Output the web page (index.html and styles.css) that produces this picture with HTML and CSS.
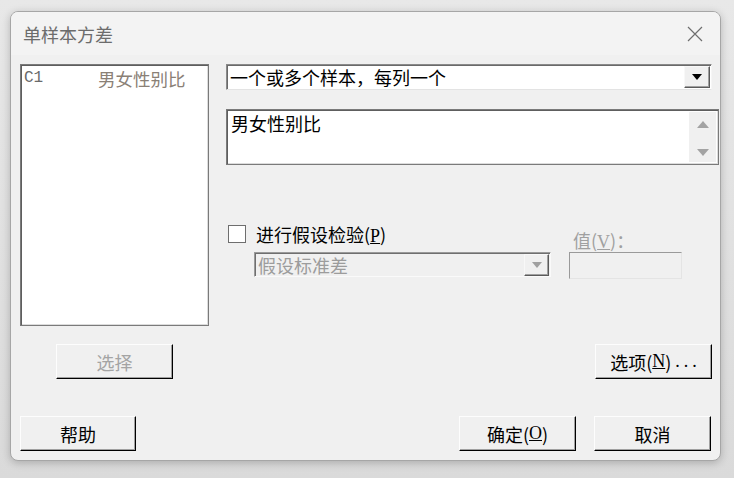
FILE: index.html
```html
<!DOCTYPE html>
<html lang="zh-CN">
<head>
<meta charset="utf-8">
<title>单样本方差</title>
<link rel="stylesheet" href="styles.css">
</head>
<body>
<div class="dialog">
  <div class="titlebar">
    <span class="title">单样本方差</span>
    <svg class="close" width="16" height="16" viewBox="0 0 16 16"><path d="M1 1L15 15M15 1L1 15" stroke="#6e6e6e" stroke-width="1.2" fill="none"/></svg>
  </div>
  <div class="body">
    <div class="main">
      <div class="listbox">
        <div class="var"><span class="vid">C1</span><span class="vname">男女性别比</span></div>
      </div>
      <div class="right">
        <div class="combo">
          <span class="combo-text">一个或多个样本，每列一个</span>
          <span class="drop"><svg width="10" height="6" viewBox="0 0 10 6"><path d="M0 0H10L5 6Z" fill="#000"/></svg></span>
        </div>
        <div class="textbox">
          <span class="tb-text">男女性别比</span>
          <div class="scroll">
            <svg width="12" height="7" viewBox="0 0 12 7"><path d="M0 7H12L6 0Z" fill="#a3a3a3"/></svg>
            <svg width="12" height="7" viewBox="0 0 12 7"><path d="M0 0H12L6 7Z" fill="#a3a3a3"/></svg>
          </div>
        </div>
        <div class="hyp">
          <div class="hyp-left">
            <label class="check-row"><span class="checkbox"></span><span>进行假设检验(<u>P</u>)</span></label>
            <div class="combo disabled">
              <span class="combo-text">假设标准差</span>
              <span class="drop"><svg width="10" height="6" viewBox="0 0 10 6"><path d="M0 0H10L5 6Z" fill="#a0a0a0"/></svg></span>
            </div>
          </div>
          <div class="hyp-right">
            <span class="val-label">值(<u>V</u>)：</span>
            <div class="valbox"></div>
          </div>
        </div>
      </div>
    </div>
    <div class="row1">
      <button class="btn btn-select" disabled>选择</button>
      <button class="btn">选项(<u>N</u>)<span class="dots">...</span></button>
    </div>
    <div class="row2">
      <button class="btn btn-help">帮助</button>
      <div class="row2-right">
        <button class="btn">确定(<u>O</u>)</button>
        <button class="btn">取消</button>
      </div>
    </div>
  </div>
</div>
</body>
</html>
```

FILE: styles.css
```css
html, body {
  margin: 0;
  padding: 0;
}
body {
  width: 734px;
  height: 478px;
  background: linear-gradient(#e8e8e8, #dadada);
  font-family: "Liberation Serif", "Noto Sans CJK SC", serif;
  font-size: 18px;
  color: #000;
  overflow: hidden;
}
.dialog {
  margin: 11px 0 0 10px;
  width: 709px;
  height: 448px;
  border: 1px solid #a6a6a6;
  border-radius: 8px;
  background: #f0f0f0;
  box-shadow: 0 2px 8px rgba(0, 0, 0, 0.22);
  overflow: hidden;
}
.titlebar {
  height: 43px;
  background: #f3f3f3;
  display: flex;
  align-items: center;
  justify-content: space-between;
  padding: 0 17px 0 12px;
}
.title {
  font-family: "Noto Sans CJK SC", sans-serif;
  font-size: 18px;
  color: #6c6c6c;
  line-height: 20px;
}
.close {
  display: block;
}
.body {
  padding: 9px 0 0 9px;
}
.main {
  display: flex;
  height: 262px;
}
.listbox {
  box-sizing: border-box;
  width: 189px;
  height: 262px;
  background: #fff;
  border: 1px solid #7a7a7a;
  box-shadow: inset 1px 1px #5e5e5e, inset -1px -1px #dcdcdc;
  padding: 2px 0 0 3px;
}
.var {
  display: flex;
  align-items: center;
  height: 22px;
}
.vid {
  font-family: "Liberation Mono", monospace;
  font-size: 16px;
  color: #6a6a6a;
  width: 74px;
}
.vname {
  font-family: "Noto Sans CJK SC", sans-serif;
  font-size: 17.5px;
  color: #8a8076;
}
.right {
  margin-left: 17px;
  width: 493px;
}
.combo {
  box-sizing: border-box;
  width: 486px;
  height: 26px;
  background: #fff;
  border: 1px solid;
  border-color: #8a8a8a #f6f6f6 #e3e3e3 #8a8a8a;
  box-shadow: inset 1px 1px #6a6a6a;
  display: flex;
  align-items: center;
  justify-content: space-between;
  padding: 0 1px 0 3px;
}
.combo-text {
  font-family: "Noto Sans CJK SC", sans-serif;
  font-size: 18px;
  line-height: 20px;
}
.drop {
  box-sizing: border-box;
  width: 26px;
  height: 22px;
  background: #f0f0f0;
  border: 1px solid;
  border-color: #f8f8f8 #5a5a5a #5a5a5a #f8f8f8;
  box-shadow: inset -1px -1px #a0a0a0;
  display: flex;
  align-items: center;
  justify-content: center;
}
.drop svg {
  display: block;
}
.textbox {
  box-sizing: border-box;
  margin-top: 19px;
  width: 493px;
  height: 56px;
  background: #fff;
  border: 1px solid #7a7a7a;
  box-shadow: inset 1px 1px #5e5e5e, inset -1px -1px #dcdcdc;
  display: flex;
  justify-content: space-between;
  padding: 2px 2px 2px 4px;
}
.tb-text {
  font-family: "Noto Sans CJK SC", sans-serif;
  font-size: 18px;
  line-height: 22px;
}
.scroll {
  width: 27px;
  background: #f0f0f0;
  display: flex;
  flex-direction: column;
  align-items: center;
  justify-content: space-between;
  padding: 9px 0 6px;
}
.scroll svg {
  display: block;
}
.hyp {
  margin-top: 60px;
  display: flex;
}
.hyp-left {
  width: 325px;
}
.check-row {
  display: flex;
  align-items: center;
  height: 18px;
  padding-left: 2px;
  font-family: "Noto Sans CJK SC", sans-serif;
  font-size: 18px;
}
.check-row u {
  font-family: "Liberation Serif", serif;
}
.checkbox {
  box-sizing: border-box;
  width: 18px;
  height: 18px;
  background: #fff;
  border: 1px solid #6e6e6e;
  margin-right: 10px;
}
.combo.disabled {
  margin: 9px 0 0 28px;
  width: 297px;
  height: 25px;
  background: #f0f0f0;
  box-shadow: inset 1px 1px #6f6f6f;
  border-color: #9a9a9a #fafafa #fafafa #9a9a9a;
  padding-right: 1px;
}
.combo.disabled .combo-text {
  color: #9c9c9c;
}
.combo.disabled .drop {
  width: 25px;
  height: 22px;
}
.hyp-right {
  margin-left: 18px;
  padding-top: 5px;
}
.val-label {
  display: block;
  margin-left: 4px;
  height: 22px;
  line-height: 20px;
  font-family: "Noto Sans CJK SC", sans-serif;
  font-size: 18px;
  color: #a0a0a0;
}
.val-label u {
  font-family: "Liberation Serif", serif;
}
.valbox {
  box-sizing: border-box;
  width: 113px;
  height: 27px;
  background: #f0f0f0;
  border: 1px solid;
  border-color: #9a9a9a #e4e4e4 #e4e4e4 #9a9a9a;
}
.row1 {
  margin-top: 18px;
  display: flex;
  justify-content: space-between;
  padding-right: 8px;
}
.row2 {
  margin-top: 37px;
  display: flex;
  justify-content: space-between;
  padding-right: 9px;
}
.row2-right {
  display: flex;
  gap: 18px;
}
.btn {
  box-sizing: border-box;
  width: 117px;
  height: 35px;
  margin: 0;
  padding: 0;
  background: #f0f0f0;
  border: 1px solid;
  border-color: #fdfdfd #000 #000 #fdfdfd;
  box-shadow: inset -1px -1px #a0a0a0;
  font-family: "Noto Sans CJK SC", sans-serif;
  font-size: 18px;
  color: #000;
  display: flex;
  align-items: center;
  justify-content: center;
}
.btn u {
  font-family: "Liberation Serif", serif;
}
.dots {
  font-family: "Liberation Serif", serif;
  letter-spacing: 4px;
  margin-left: 4px;
  margin-right: -4px;
}
.btn-select {
  margin-left: 36px;
  color: #a4a4a4;
}
.btn-help {
  width: 116px;
}
```
